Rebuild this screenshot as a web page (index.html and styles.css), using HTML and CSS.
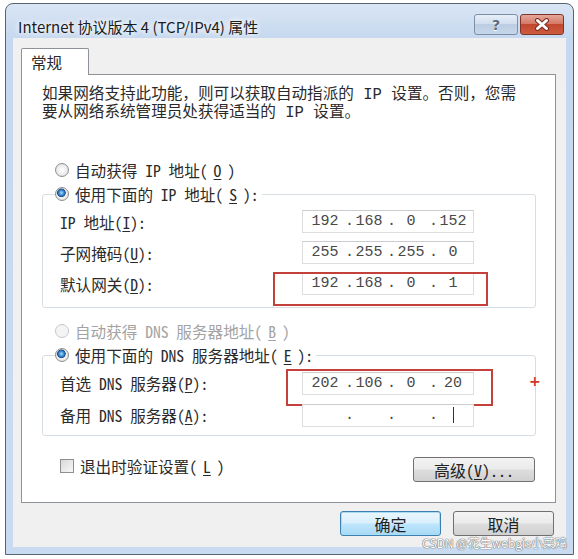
FILE: index.html
```html
<!DOCTYPE html>
<html lang="zh-CN">
<head>
    <meta charset="UTF-8">
    <meta name="viewport" content="width=device-width, initial-scale=1.0">
    <title>Internet 协议版本 4 (TCP/IPv4) 属性</title>
    <link rel="stylesheet" href="styles.css">
</head>
<body>
    <div class="window">
        <div class="titlebar">
            <span class="title">Internet 协议版本 4 (TCP/IPv4) 属性</span>
            <div class="caption-buttons">
                <span class="cap-btn help">?</span>
                <span class="cap-btn close">
                    <svg width="16" height="13" viewBox="0 0 16 13">
                        <path d="M3.5 2.5 L12.5 10.5 M12.5 2.5 L3.5 10.5" stroke="#7a2d22" stroke-width="5" stroke-linecap="round" fill="none"/>
                        <path d="M3.5 2.5 L12.5 10.5 M12.5 2.5 L3.5 10.5" stroke="#fff" stroke-width="3" stroke-linecap="round" fill="none"/>
                    </svg>
                </span>
            </div>
        </div>

        <div class="client">
            <div class="tab">常规</div>
            <div class="panel">
                <p class="intro">如果网络支持此功能，则可以获取自动指派的 IP 设置。否则，您需<br>要从网络系统管理员处获得适当的 IP 设置。</p>

                <div class="option option-first"><span class="radio"></span>自动获得 IP 地址(<u>O</u>)</div>
                <fieldset class="group group-ip">
                    <legend class="option"><span class="radio checked"></span>使用下面的 IP 地址(<u>S</u>):</legend>
                    <div class="row">
                        <span>IP 地址(<u>I</u>):</span>
                        <div class="ipbox"><span class="oct">192</span><span class="dot">.</span><span class="oct">168</span><span class="dot">.</span><span class="oct">0</span><span class="dot">.</span><span class="oct">152</span></div>
                    </div>
                    <div class="row">
                        <span>子网掩码(<u>U</u>):</span>
                        <div class="ipbox"><span class="oct">255</span><span class="dot">.</span><span class="oct">255</span><span class="dot">.</span><span class="oct">255</span><span class="dot">.</span><span class="oct">0</span></div>
                    </div>
                    <div class="row">
                        <span>默认网关(<u>D</u>):</span>
                        <div class="ipbox"><span class="oct">192</span><span class="dot">.</span><span class="oct">168</span><span class="dot">.</span><span class="oct">0</span><span class="dot">.</span><span class="oct">1</span>
                            <span class="mark mark-gateway"></span>
                        </div>
                    </div>
                </fieldset>

                <div class="option option-dns disabled"><span class="radio"></span>自动获得 DNS 服务器地址(<u>B</u>)</div>
                <fieldset class="group group-dns">
                    <legend class="option"><span class="radio checked"></span>使用下面的 DNS 服务器地址(<u>E</u>):</legend>
                    <div class="row row-dns">
                        <span>首选 DNS 服务器(<u>P</u>):</span>
                        <div class="ipbox"><span class="oct">202</span><span class="dot">.</span><span class="oct">106</span><span class="dot">.</span><span class="oct">0</span><span class="dot">.</span><span class="oct">20</span>
                            <span class="mark mark-dns"></span>
                            <span class="plus">+</span>
                        </div>
                    </div>
                    <div class="row row-dns">
                        <span>备用 DNS 服务器(<u>A</u>):</span>
                        <div class="ipbox"><span class="oct"></span><span class="dot">.</span><span class="oct"></span><span class="dot">.</span><span class="oct"></span><span class="dot">.</span><span class="oct"><span class="caret"></span></span></div>
                    </div>
                </fieldset>

                <div class="panel-footer">
                    <label class="check"><span class="checkbox"></span>退出时验证设置(<u>L</u>)</label>
                    <span class="btn btn-advanced">高级(<u>V</u>)...</span>
                </div>
            </div>

            <div class="dialog-buttons">
                <span class="btn btn-default">确定</span>
                <span class="btn">取消</span>
            </div>
        </div>
    </div>

    <div class="watermark">CSDN @花生webgis小菜鸡</div>
</body>
</html>
```

FILE: styles.css
```css
* {
    margin: 0;
    padding: 0;
    box-sizing: border-box;
}

body {
    background: #fff;
    font-family: "Noto Sans Mono CJK SC", "DejaVu Sans Mono", "Noto Sans CJK SC", monospace;
    font-size: 15.6px;
    color: #2a2a2a;
}

u {
    text-underline-offset: 2px;
}

/* window frame */
.window {
    margin: 3px 0 0 5px;
    width: 569px;
    height: 552px;
    border: 1px solid #58636f;
    border-radius: 8px 8px 0 0;
    background: linear-gradient(#d9e5f4, #c5d8ef 36px, #c9dbf1);
    padding: 0 7px 7px;
    display: flex;
    flex-direction: column;
}

.titlebar {
    height: 34px;
    display: flex;
    justify-content: space-between;
    align-items: flex-start;
}

.title {
    font-family: "Noto Sans CJK SC", sans-serif;
    font-size: 15px;
    line-height: 20px;
    margin: 13px 0 0 5px;
    color: #1c1c1c;
    text-shadow: 0 0 6px #fff, 0 0 6px #fff;
}

.caption-buttons {
    display: flex;
    gap: 2px;
    margin: 10px 2px 0 0;
}

.cap-btn {
    width: 44px;
    height: 21px;
    border-radius: 3px;
    display: flex;
    align-items: center;
    justify-content: center;
}

.help {
    border: 1px solid #7d8ea5;
    background: linear-gradient(#e6eef8, #d3dfee 45%, #bccde3 50%, #c6d6ea);
    font-family: "DejaVu Sans", sans-serif;
    font-weight: bold;
    font-size: 14px;
    color: #5a6a80;
    text-shadow: 0 1px 0 #fff;
}

.close {
    border: 1px solid #7d352b;
    background: linear-gradient(#e5a89b, #d57a66 45%, #c2472f 50%, #cd5c3e);
}

/* client area */
.client {
    flex: 1;
    background: #f0f0f0;
    padding-top: 10px;
}

.tab {
    position: relative;
    z-index: 1;
    width: 68px;
    height: 27px;
    margin: 0 0 -1px 8px;
    padding-left: 9px;
    line-height: 26px;
    background: #fff;
    border: 1px solid #8e9299;
    border-bottom: none;
    border-radius: 2px 2px 0 0;
}

.panel {
    margin: 0 10px 0 8px;
    padding: 11px 19px 20px 20px;
    background: #fff;
    border: 1px solid #8e9299;
}

/* tight two-line text: primary font with a short line box */
.intro {
    font-family: "Liberation Mono", "Noto Sans Mono CJK SC", "Noto Sans CJK SC", monospace;
    line-height: 18px;
}

.option {
    display: flex;
    align-items: center;
    gap: 6px;
    height: 24px;
    padding-left: 13px;
}

.option-first {
    margin-top: 36px;
}

.option-dns {
    margin-top: 11px;
}

.disabled {
    color: #a3a3a3;
}

.radio {
    width: 14px;
    height: 14px;
    border-radius: 50%;
    border: 1px solid #8c8e91;
    background: radial-gradient(circle, #fff 0, #eaeaea 60%, #d2d2d2 100%);
}

.disabled .radio {
    border-color: #c8c8c8;
    background: #f4f4f4;
}

.radio.checked {
    background:
        radial-gradient(circle at 45% 40%, #a9dcfb 0, #3a8ad0 2.5px, #1a4f8a 4px, transparent 4.6px),
        radial-gradient(circle, #fff 0, #eaeaea 60%, #d2d2d2 100%);
}

/* group boxes */
.group {
    margin: 0;
    min-width: 0;
    border: 1px solid #d6dde3;
    border-radius: 3px;
    padding: 0 0 8px 17px;
}

.group legend {
    margin-left: -5px;
    padding: 0 3px 0 0;
}

.group-dns {
    padding-bottom: 4px;
}

.row {
    display: grid;
    grid-template-columns: 242px 172px;
    align-items: center;
    height: 31px;
}

.row-dns {
    height: 32px;
}

.ipbox {
    position: relative;
    display: flex;
    align-items: center;
    width: 172px;
    height: 23px;
    padding-left: 2px;
    background: #fff;
    border: 1px solid #dcdde0;
    border-top-color: #cbccd0;
    font-family: "Liberation Mono", monospace;
    font-size: 15px;
    color: #484848;
}

.oct {
    width: 36px;
    display: flex;
    justify-content: center;
}

.oct:first-child {
    width: 40px;
}

.dot {
    width: 6px;
    text-align: center;
}

.caret {
    width: 1px;
    height: 16px;
    background: #333;
}

/* red annotations */
.mark {
    position: absolute;
    border: 2px solid #c4403b;
}

.mark-gateway {
    top: -1px;
    left: -30px;
    width: 215px;
    height: 34px;
}

.mark-dns {
    top: -4px;
    left: -17px;
    width: 207px;
    height: 37px;
}

.plus {
    position: absolute;
    left: 226px;
    top: 0;
    color: #d0342c;
    font-family: "DejaVu Sans", sans-serif;
    font-weight: bold;
    font-size: 14px;
}

/* footer */
.panel-footer {
    display: flex;
    justify-content: space-between;
    align-items: flex-start;
    margin-top: 21px;
    padding: 0 1px 0 18px;
}

.check {
    display: flex;
    align-items: center;
    gap: 6px;
    line-height: 18px;
}

.checkbox {
    width: 14px;
    height: 14px;
    border: 1px solid #8f8f8f;
    background: linear-gradient(135deg, #d9d9d9, #f7f7f7);
}

.btn {
    display: flex;
    align-items: center;
    justify-content: center;
    width: 101px;
    height: 25px;
    border: 1px solid #707070;
    border-radius: 3px;
    background: linear-gradient(#f3f3f3, #ebebeb 48%, #dddddd 52%, #d1d1d1);
    font-size: 16px;
    color: #222;
}

.btn-advanced {
    width: 122px;
}

.btn-default {
    border-color: #3c7fb1;
    background: linear-gradient(#eaf6fd, #d9f0fc 48%, #bee6fd 52%, #a7d9f5);
    box-shadow: inset 0 0 0 1px #a9dcf6;
}

.dialog-buttons {
    display: flex;
    justify-content: flex-end;
    gap: 12px;
    margin-top: 8px;
    padding-right: 12px;
}

.watermark {
    position: absolute;
    right: 11px;
    top: 535px;
    font-family: "Noto Sans CJK SC", sans-serif;
    font-size: 12px;
    line-height: 16px;
    color: #fff;
    text-shadow: 0 0 1px #6a6a6a, 0 0 1px #6a6a6a, 0 0 1px #6a6a6a;
}
```
